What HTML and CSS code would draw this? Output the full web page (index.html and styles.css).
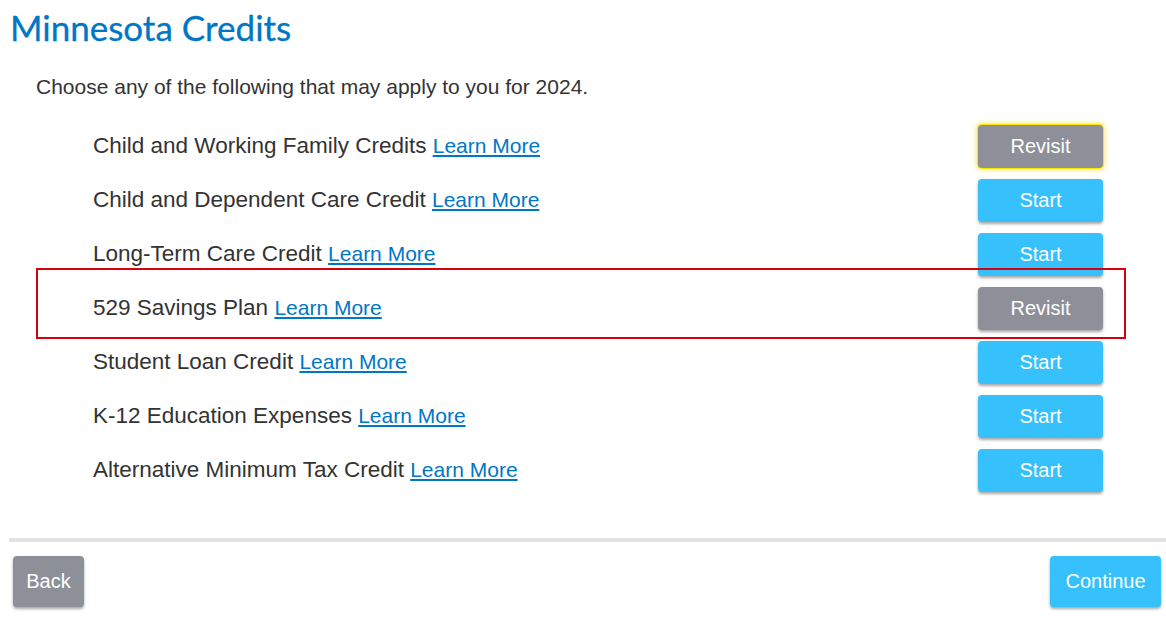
FILE: index.html
```html
<!DOCTYPE html>
<html>
<head>
<meta charset="utf-8">
<link rel="stylesheet" href="styles.css">
</head>
<body>
<div class="page">
  <h1 class="title">Minnesota Credits</h1>
  <p class="intro">Choose any of the following that may apply to you for 2024.</p>
  <ul class="list">
    <li class="row"><span class="label">Child and Working Family Credits <a class="link" href="#">Learn More</a></span><button class="btn btn-gray btn-focus">Revisit</button></li>
    <li class="row"><span class="label">Child and Dependent Care Credit <a class="link" href="#">Learn More</a></span><button class="btn btn-blue">Start</button></li>
    <li class="row"><span class="label">Long-Term Care Credit <a class="link" href="#">Learn More</a></span><button class="btn btn-blue">Start</button></li>
    <li class="row row-marked"><span class="label">529 Savings Plan <a class="link" href="#">Learn More</a></span><button class="btn btn-gray">Revisit</button></li>
    <li class="row"><span class="label">Student Loan Credit <a class="link" href="#">Learn More</a></span><button class="btn btn-blue">Start</button></li>
    <li class="row"><span class="label">K-12 Education Expenses <a class="link" href="#">Learn More</a></span><button class="btn btn-blue">Start</button></li>
    <li class="row"><span class="label">Alternative Minimum Tax Credit <a class="link" href="#">Learn More</a></span><button class="btn btn-blue">Start</button></li>
  </ul>
  <div class="footer">
    <button class="btn btn-gray btn-nav btn-back">Back</button>
    <button class="btn btn-blue btn-nav btn-continue">Continue</button>
  </div>
</div>
</body>
</html>
```
FILE: styles.css
```css
* { box-sizing: border-box; }
html, body { margin: 0; padding: 0; background: #fff; }
body { font-family: "Liberation Sans", Arial, sans-serif; color: #333; }
.page { width: 1166px; height: 618px; overflow: hidden; }
.title {
  margin: 0;
  padding: 8px 0 0 10px;
  font-family: "Lato", "Open Sans", sans-serif;
  font-weight: 400;
  font-size: 35px;
  line-height: 38px;
  color: #0077c5;
  -webkit-text-stroke: 0.3px #0077c5;
}
.intro {
  margin: 29px 0 0 36px;
  font-size: 21px;
  line-height: 24px;
  color: #333;
}
.list {
  list-style: none;
  margin: 20px 63px 0 93px;
  padding: 0;
}
.row {
  display: flex;
  align-items: center;
  justify-content: space-between;
  height: 54px;
  position: relative;
}
.row-marked::after {
  content: "";
  position: absolute;
  left: -57px;
  right: -23px;
  top: -13px;
  bottom: -4px;
  border: 2px solid #d9000d;
  pointer-events: none;
}
.label { font-size: 22.5px; color: #333; }
.link { font-size: 21px; color: #0077c5; text-decoration: underline; }
.btn {
  font-family: "Liberation Sans", Arial, sans-serif;
  font-size: 20px;
  color: #fff;
  border: none;
  border-radius: 4px;
  width: 125px;
  height: 43px;
  padding: 0;
  box-shadow: 0 2px 3px rgba(0,0,0,0.35);
  cursor: pointer;
}
.btn-blue { background: #36c0fc; }
.btn-gray { background: #8d9098; }
.btn-focus { box-shadow: 0 0 0 1px #ffe300, 0 0 5px 2px #ffe97a; }
.footer {
  margin: 41px 0 0 9px;
  border-top: 4px solid #e2e2e2;
  display: flex;
  justify-content: space-between;
  padding: 14px 5px 0 4px;
}
.btn-nav { height: 51px; }
.btn-back { width: 71px; }
.btn-continue { width: 111px; }
```
